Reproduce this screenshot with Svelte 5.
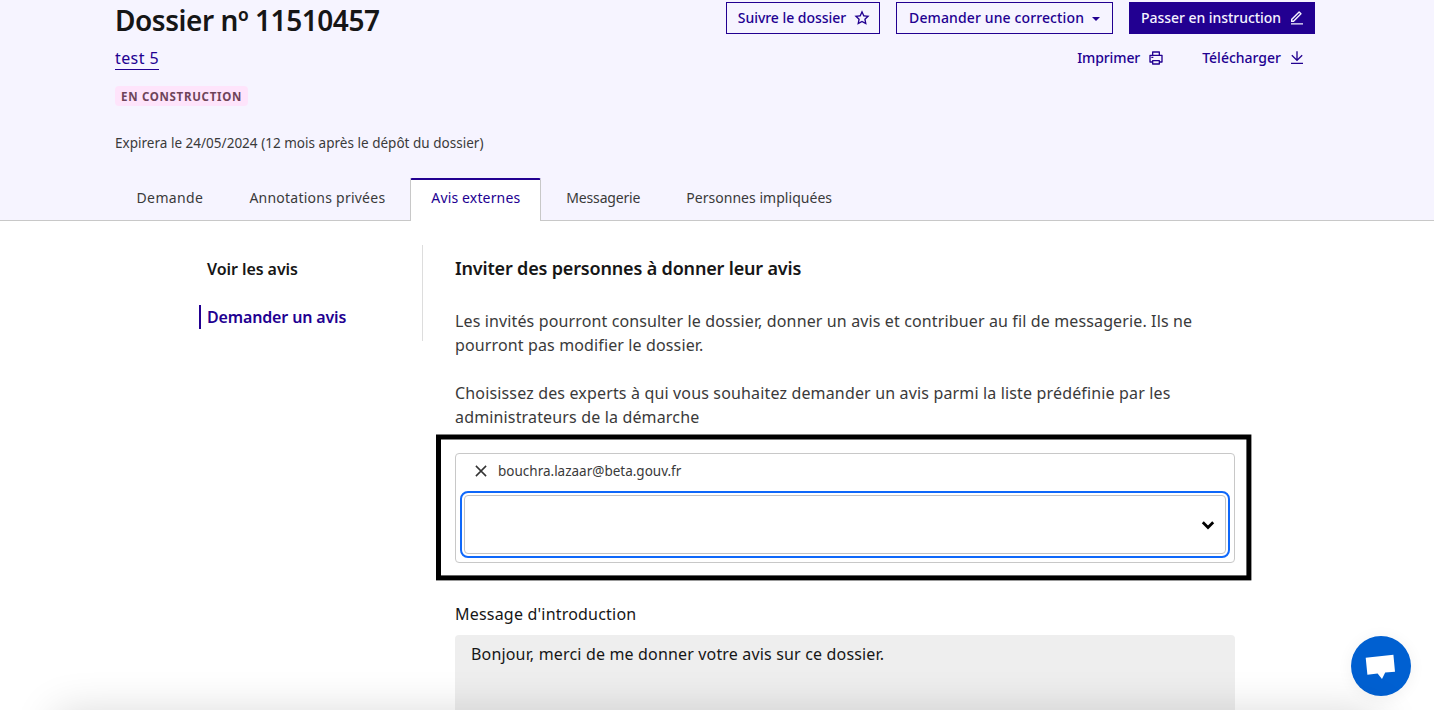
<script>
  const tabs = [
    { label: 'Demande', spacing: 0.38 },
    { label: 'Annotations privées', spacing: 0.24 },
    { label: 'Avis externes', spacing: 0.15, active: true },
    { label: 'Messagerie', spacing: -0.17 },
    { label: 'Personnes impliquées', spacing: 0.03 }
  ];
</script>

<div class="page">
  <header>
    <div class="container">
      <div class="top">
        <div class="identity">
          <h1>Dossier nº 11510457</h1>
          <a class="procedure" href="#procedure">test 5</a>
          <span class="badge">EN CONSTRUCTION</span>
        </div>
        <div class="actions">
          <div class="row">
            <button class="btn outline">
              Suivre le dossier
              <svg width="16" height="16" viewBox="0 0 24 24"><path d="M12.0006 18.26L4.94715 22.2082L6.52248 14.2799L0.587891 8.7918L8.61493 7.84006L12.0006 0.5L15.3862 7.84006L23.4132 8.7918L17.4787 14.2799L19.054 22.2082L12.0006 18.26ZM12.0006 15.968L16.2473 18.3451L15.2988 13.5717L18.8719 10.2674L14.039 9.69434L12.0006 5.27502L9.96214 9.69434L5.12921 10.2674L8.70231 13.5717L7.75383 18.3451L12.0006 15.968Z" /></svg>
            </button>
            <button class="btn outline menu">
              Demander une correction
              <svg width="8" height="4" viewBox="0 0 8 4"><path d="M0 0h8L4 4z" /></svg>
            </button>
            <button class="btn primary">
              Passer en instruction
              <svg width="16" height="16" viewBox="0 0 24 24"><path d="M6.414 15.89L16.556 5.748l-1.414-1.414L5 14.476v1.414h1.414zm.829 2H3v-4.243L14.435 2.212a1 1 0 0 1 1.414 0l2.829 2.829a1 1 0 0 1 0 1.414L7.243 17.89zM3 19.89h18v2H3v-2z" /></svg>
            </button>
          </div>
          <div class="row">
            <button class="btn print">
              Imprimer
              <svg width="16" height="16" viewBox="0 0 24 24"><path d="M6 19H3a1 1 0 0 1-1-1V8a1 1 0 0 1 1-1h3V3a1 1 0 0 1 1-1h10a1 1 0 0 1 1 1v4h3a1 1 0 0 1 1 1v10a1 1 0 0 1-1 1h-3v2a1 1 0 0 1-1 1H7a1 1 0 0 1-1-1v-2zm0-2v-1a1 1 0 0 1 1-1h10a1 1 0 0 1 1 1v1h2V9H4v8h2zM8 4v3h8V4H8zm0 13v3h8v-3H8zm-3-7h3v2H5v-2z" /></svg>
            </button>
            <button class="btn">
              Télécharger
              <svg width="16" height="16" viewBox="0 0 24 24"><path d="M3 19h18v2H3v-2zm10-5.828L19.071 7.1l1.414 1.414L12 17 3.515 8.515 4.929 7.1 11 13.17V2h2v11.172z" /></svg>
            </button>
          </div>
        </div>
      </div>
      <p class="expiry">Expirera le 24/05/2024 (12 mois après le dépôt du dossier)</p>
      <nav class="tabs">
        {#each tabs as tab}
          <a href="#tab" class="tab" class:active={tab.active} style="letter-spacing: {tab.spacing}px">{tab.label}</a>
        {/each}
      </nav>
    </div>
  </header>

  <main>
    <aside>
      <a class="side" href="#avis">Voir les avis</a>
      <a class="side current" href="#demander">Demander un avis</a>
    </aside>
    <section>
      <h2>Inviter des personnes à donner leur avis</h2>
      <p class="intro">Les invités pourront consulter le dossier, donner un avis et contribuer au fil de messagerie. Ils ne<br />pourront pas modifier le dossier.</p>
      <p class="intro choose">Choisissez des experts à qui vous souhaitez demander un avis parmi la liste prédéfinie par les<br />administrateurs de la démarche</p>
      <div class="combo">
        <div class="chip">
          <svg width="12" height="12" viewBox="0 0 12 12"><path d="M.9.9l10.2 10.2M11.1.9L.9 11.1" /></svg>
          <span>bouchra.lazaar@beta.gouv.fr</span>
        </div>
        <div class="field">
          <svg width="14" height="10" viewBox="0 0 14 10"><path d="M1.8 2.2l5.2 5.2 5.2-5.2" /></svg>
        </div>
        <svg class="frame" width="816" height="147" viewBox="0 0 816 147"><rect x="2.5" y="3" width="810.4" height="140.9" /></svg>
      </div>
      <div class="label">Message d'introduction</div>
      <div class="textarea">Bonjour, merci de me donner votre avis sur ce dossier.</div>
    </section>
  </main>

  <div class="chat">
    <svg width="60" height="60" viewBox="0 0 60 60"><path d="M14.7 21.7L42.4 18.7L44 35.7L34.2 36.6L31 43L26.6 37.5L16.4 38.8Z" /></svg>
  </div>
  <div class="shade"></div>
</div>

<style>
  .page {
    position: relative;
    height: 710px;
    overflow: hidden;
    background: #fff;
    color: #3a3a3a;
    font: 16px/24px 'Noto Sans', 'Open Sans', sans-serif;
  }
  .page * { box-sizing: border-box; }
  a { text-decoration: none; }
  header {
    height: 221px;
    background: #f6f4ff;
    border-bottom: 1px solid #c8c8c8;
  }
  .container { width: 1200px; margin-left: 115px; }
  .top { display: flex; justify-content: space-between; height: 131px; padding-top: 2px; }
  .identity { display: flex; flex-direction: column; align-items: flex-start; }
  h1 {
    margin: 0 0 8px;
    color: #161616;
    font-size: 28px;
    line-height: 36px;
    font-weight: 600;
    letter-spacing: -0.45px;
  }
  .procedure {
    height: 24px;
    color: #220091;
    letter-spacing: 0.4px;
    border-bottom: 1px solid #220091;
  }
  .badge {
    width: 133px;
    height: 20px;
    margin-top: 16px;
    padding: 0 6px;
    border-radius: 4px;
    background: #fee4fb;
    color: #6e445a;
    font-size: 11.5px;
    line-height: 22px;
    font-weight: 700;
    letter-spacing: 0.7px;
    white-space: nowrap;
  }
  .actions { display: flex; flex-direction: column; gap: 8px; }
  .row { display: flex; justify-content: flex-end; gap: 16px; }
  .btn {
    display: flex;
    align-items: center;
    gap: 8px;
    height: 32px;
    padding: 0 10px 0 12px;
    border: 0;
    background: transparent;
    color: #220091;
    font: 500 14px/24px 'Noto Sans', 'Open Sans', sans-serif;
    white-space: nowrap;
  }
  .btn svg { fill: currentColor; }
  .outline { box-shadow: inset 0 0 0 1px #220091; letter-spacing: -0.04px; }
  .menu { padding: 0 13px; letter-spacing: 0.12px; }
  .menu svg { margin-top: 2px; }
  .primary { background: #220091; color: #f5f3ff; letter-spacing: -0.05px; }
  .print { letter-spacing: -0.1px; }
  .expiry { margin: 0; font-size: 13.5px; letter-spacing: 0.02px; }
  .tabs { display: flex; gap: 4px; margin-top: 23px; }
  .tab {
    height: 43px;
    padding: 6px 19.5px 0 20.5px;
    border: solid transparent;
    border-width: 2px 1px 0;
    color: #3a3a3a;
    font-size: 14px;
    white-space: nowrap;
  }
  .active {
    position: relative;
    background: #fff;
    color: #220091;
    border-color: #220091 #c8c8c8 transparent;
    border-radius: 2px 2px 0 0;
  }
  main { display: flex; padding: 24px 0 0 199px; }
  aside {
    display: flex;
    flex-direction: column;
    gap: 24px;
    width: 224px;
    height: 96px;
    padding-top: 12px;
    border-right: 1px solid #ddd;
  }
  .side {
    padding-left: 6px;
    border-left: 2px solid transparent;
    color: #161616;
    font-weight: 600;
    letter-spacing: -0.07px;
  }
  .current { color: #220091; border-color: #220091; letter-spacing: -0.15px; }
  section { width: 780px; margin-left: 32px; padding-top: 11px; }
  h2 {
    margin: 0 0 29px;
    color: #161616;
    font-size: 18px;
    line-height: 24px;
    font-weight: 600;
    letter-spacing: -0.17px;
  }
  .intro { margin: 0 0 24px; letter-spacing: 0.13px; white-space: nowrap; }
  .choose { letter-spacing: 0.155px; }
  .combo {
    position: relative;
    height: 110px;
    padding: 5px 8px 0;
    border: 1px solid #c8c8c8;
    border-radius: 4px;
  }
  .chip {
    display: flex;
    align-items: center;
    gap: 11px;
    height: 24px;
    padding-left: 11px;
    font-size: 13.5px;
  }
  .chip svg { fill: none; stroke: #333; stroke-width: 1.5; }
  .field {
    display: flex;
    align-items: center;
    justify-content: flex-end;
    height: 59px;
    margin-top: 12px;
    padding-right: 10px;
    border: 1px solid #c4c4c4;
    border-radius: 4px;
    outline: 2px solid #0f68fa;
    outline-offset: 2px;
  }
  .field svg { fill: none; stroke: #000; stroke-width: 2.8; }
  .frame { position: absolute; left: -20px; top: -20px; fill: none; stroke: #000; stroke-width: 5; }
  .label { margin-top: 39px; color: #161616; letter-spacing: 0.2px; }
  .textarea {
    height: 120px;
    margin-top: 9px;
    padding: 7px 16px;
    border-radius: 4px 4px 0 0;
    background: #eee;
    color: #161616;
    letter-spacing: 0.165px;
  }
  .chat {
    position: absolute;
    left: 1351px;
    top: 636px;
    width: 60px;
    height: 60px;
    border-radius: 50%;
    background: #0060d1;
    box-shadow: 0 2px 16px rgba(0, 0, 0, 0.06);
  }
  .chat path { fill: #fff; }
  .shade {
    position: absolute;
    left: 56px;
    right: 56px;
    top: calc(100% + 3px);
    height: 60px;
    box-shadow: 0 0 44px rgba(0, 0, 0, 0.16);
  }
</style>
